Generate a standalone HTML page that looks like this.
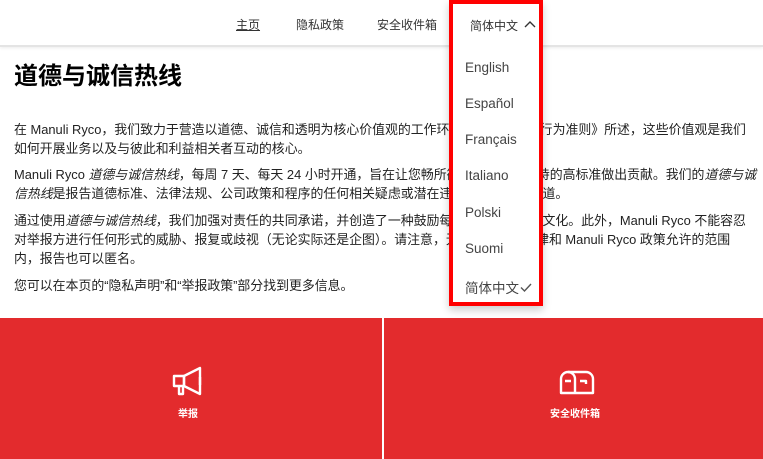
<!DOCTYPE html>
<html><head><meta charset="utf-8"><style>
*{margin:0;padding:0;box-sizing:border-box}
body{width:763px;height:459px;overflow:hidden;background:#fff;font-family:"Liberation Sans","Noto Sans CJK SC",sans-serif;color:#111;position:relative}
.hdr{position:absolute;left:0;top:0;width:763px;height:47px;border-bottom:2px solid #e4e4e4;box-shadow:0 1px 3px rgba(0,0,0,.08)}
.nav{position:absolute;top:16px;font-size:12px;color:#333}
h1{position:absolute;left:14px;top:56px;font-size:24px;font-weight:bold;color:#000}
.p{position:absolute;left:14px;width:760px;font-size:12.9px;line-height:19px;color:#222;white-space:nowrap}
.red{position:absolute;top:318px;height:141px;background:#e32b2d}
.lbl{position:absolute;color:#fff;font-size:10px;font-weight:bold;top:405px}
.dd{position:absolute;left:449px;top:0;width:94px;height:306px;border:4px solid #ff0000;background:#fff;box-shadow:0 4px 8px rgba(0,0,0,.2)}
.dd div{position:absolute;left:12px;font-size:13.5px;color:#444}
</style></head><body>
<div class="hdr"></div>
<div class="nav" style="left:236px;text-decoration:underline">主页</div>
<div class="nav" style="left:296px">隐私政策</div>
<div class="nav" style="left:377px">安全收件箱</div>
<h1>道德与诚信热线</h1>
<div class="p" style="top:120px">在 Manuli Ryco，我们致力于营造以道德、诚信和透明为核心价值观的工作环境，正如《商业行为准则》所述，这些价值观是我们<br>如何开展业务以及与彼此和利益相关者互动的核心。</div>
<div class="p" style="top:165px">Manuli Ryco <i>道德与诚信热线</i>，每周 7 天、每天 24 小时开通，旨在让您畅所欲言，为我们坚持的高标准做出贡献。我们的<i>道德与诚</i><br><i>信热线</i>是报告道德标准、法律法规、公司政策和程序的任何相关疑虑或潜在违反行为的安全渠道。</div>
<div class="p" style="top:211px">通过使用<i>道德与诚信热线</i>，我们加强对责任的共同承诺，并创造了一种鼓励每个人畅所欲言的文化。此外，Manuli Ryco 不能容忍<br>对举报方进行任何形式的威胁、报复或歧视（无论实际还是企图）。请注意，无论何时，在法律和 Manuli Ryco 政策允许的范围<br>内，报告也可以匿名。</div>
<div class="p" style="top:276px">您可以在本页的“隐私声明”和“举报政策”部分找到更多信息。</div>
<div class="red" style="left:0;width:382px"></div>
<div class="red" style="left:384px;width:379px"></div>
<svg style="position:absolute;left:172px;top:366px" width="32" height="32" viewBox="0 0 32 32" fill="none" stroke="#fff" stroke-width="2.4" stroke-linejoin="round"><path d="M2 10h10v10H2z"/><path d="M12 10l16-8v26l-16-8z"/><path d="M7 20v8h4v-8"/><path d="M28 11v8"/></svg>
<div class="lbl" style="left:178px">举报</div>
<svg style="position:absolute;left:559px;top:370px" width="36" height="26" viewBox="0 0 36 26" fill="none" stroke="#fff" stroke-width="2.4" stroke-linejoin="round"><path d="M2 23V9a7 7 0 0 1 7-7h18a7 7 0 0 1 7 7v14z"/><path d="M16 23V9a7 7 0 0 0-7-7"/><path d="M6 11h6M21 11h6v3"/></svg>
<div class="lbl" style="left:550px">安全收件箱</div>
<div class="dd">
<div style="top:13px;left:17px;font-size:12px;color:#333">简体中文</div>
<svg style="position:absolute;left:71px;top:16px" width="12" height="8" viewBox="0 0 12 8" fill="none" stroke="#333" stroke-width="1.4"><path d="M1 7l5-5 5 5"/></svg>
<div style="top:56px">English</div>
<div style="top:92px">Español</div>
<div style="top:128px">Français</div>
<div style="top:164px">Italiano</div>
<div style="top:201px">Polski</div>
<div style="top:237px">Suomi</div>
<div style="top:273px">简体中文</div>
<svg style="position:absolute;left:67px;top:279px" width="12" height="9" viewBox="0 0 12 9" fill="none" stroke="#555" stroke-width="1.4"><path d="M1 4.5l3.5 3.5L11 1"/></svg>
</div>
</body></html>
